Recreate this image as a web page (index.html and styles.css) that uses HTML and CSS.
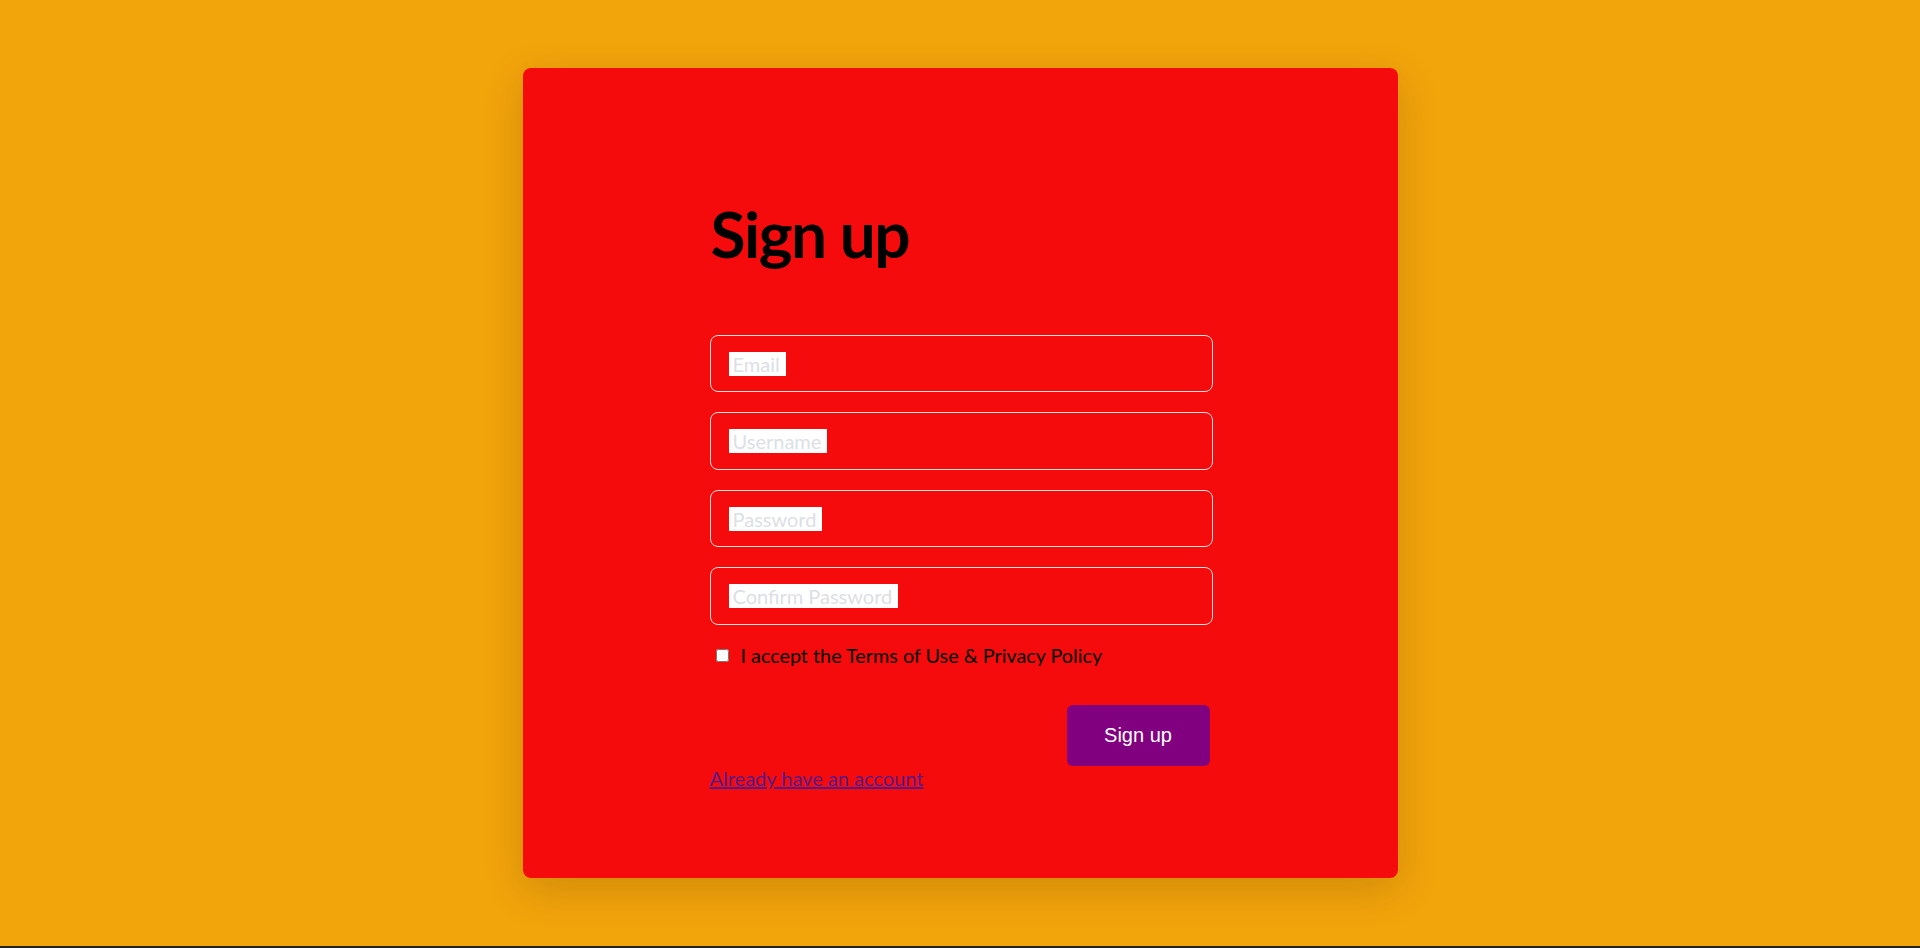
FILE: index.html
```html
<!DOCTYPE html>
<html lang="en">
<head>
<meta charset="utf-8">
<title>Sign up</title>
<link rel="stylesheet" href="styles.css">
</head>
<body>
<main class="page">
  <section class="card">
    <form class="form">
      <h1 class="title">Sign up</h1>
      <input class="field" type="email" placeholder="Email">
      <input class="field" type="text" placeholder="Username">
      <input class="field" type="password" placeholder="Password">
      <input class="field" type="password" placeholder="Confirm Password">
      <label class="terms">
        <input class="check" type="checkbox">
        <span>I accept the Terms of Use &amp; Privacy Policy</span>
      </label>
      <div class="actions">
        <button class="btn" type="button">Sign up</button>
      </div>
      <a class="login" href="#">Already have an account</a>
    </form>
  </section>
</main>
</body>
</html>
```
FILE: styles.css
```css
html {
  background: #222222;
}

body {
  margin: 0;
  height: 946px;
  background: #f2a40b;
  font-family: Lato, "Liberation Sans", sans-serif;
}

.page {
  height: 946px;
  display: flex;
  justify-content: center;
  align-items: center;
}

.card {
  width: 875px;
  height: 810px;
  box-sizing: border-box;
  padding-left: 2px;
  background: #f50b0b;
  border-radius: 8px;
  box-shadow: 0 12px 40px rgba(60, 30, 0, 0.18);
  display: flex;
  justify-content: center;
}

.form {
  width: 503px;
  padding-top: 128px;
  display: flex;
  flex-direction: column;
}

.title {
  margin: 0 0 62px 1px;
  font-family: Lato, sans-serif;
  font-weight: 700;
  font-size: 64px;
  line-height: 1.2;
  letter-spacing: -1.5px;
  color: #000;
}

.field {
  box-sizing: border-box;
  height: 57.5px;
  margin: 0 0 20px;
  padding: 0 18px;
  border: 1px solid #e8e2e2;
  border-radius: 8px;
  background: transparent;
  font-family: Lato, sans-serif;
  font-size: 20px;
  color: #fff;
  outline: none;
}

.field::placeholder {
  width: fit-content;
  max-width: fit-content;
  background: #ffffff;
  color: #dce0e6;
  padding: 0 6px 0 4px;
  opacity: 1;
}

.terms {
  margin-top: -0.7px;
  display: flex;
  align-items: center;
  font-size: 19.8px;
  line-height: 1.2;
  color: #000;
}

.check {
  width: 13px;
  height: 13px;
  margin: 0 12px 0 6px;
}

.actions {
  margin-top: 36.7px;
  display: flex;
  justify-content: flex-end;
}

.btn {
  width: 143px;
  height: 61px;
  margin-right: 3px;
  border: none;
  border-radius: 6px;
  background: #800080;
  color: #fff;
  font-family: "Liberation Sans", Arial, sans-serif;
  font-size: 20px;
  cursor: pointer;
}

.login {
  align-self: flex-start;
  font-size: 20px;
  line-height: 1.2;
  color: #551a8b;
  text-decoration: underline;
}
```
